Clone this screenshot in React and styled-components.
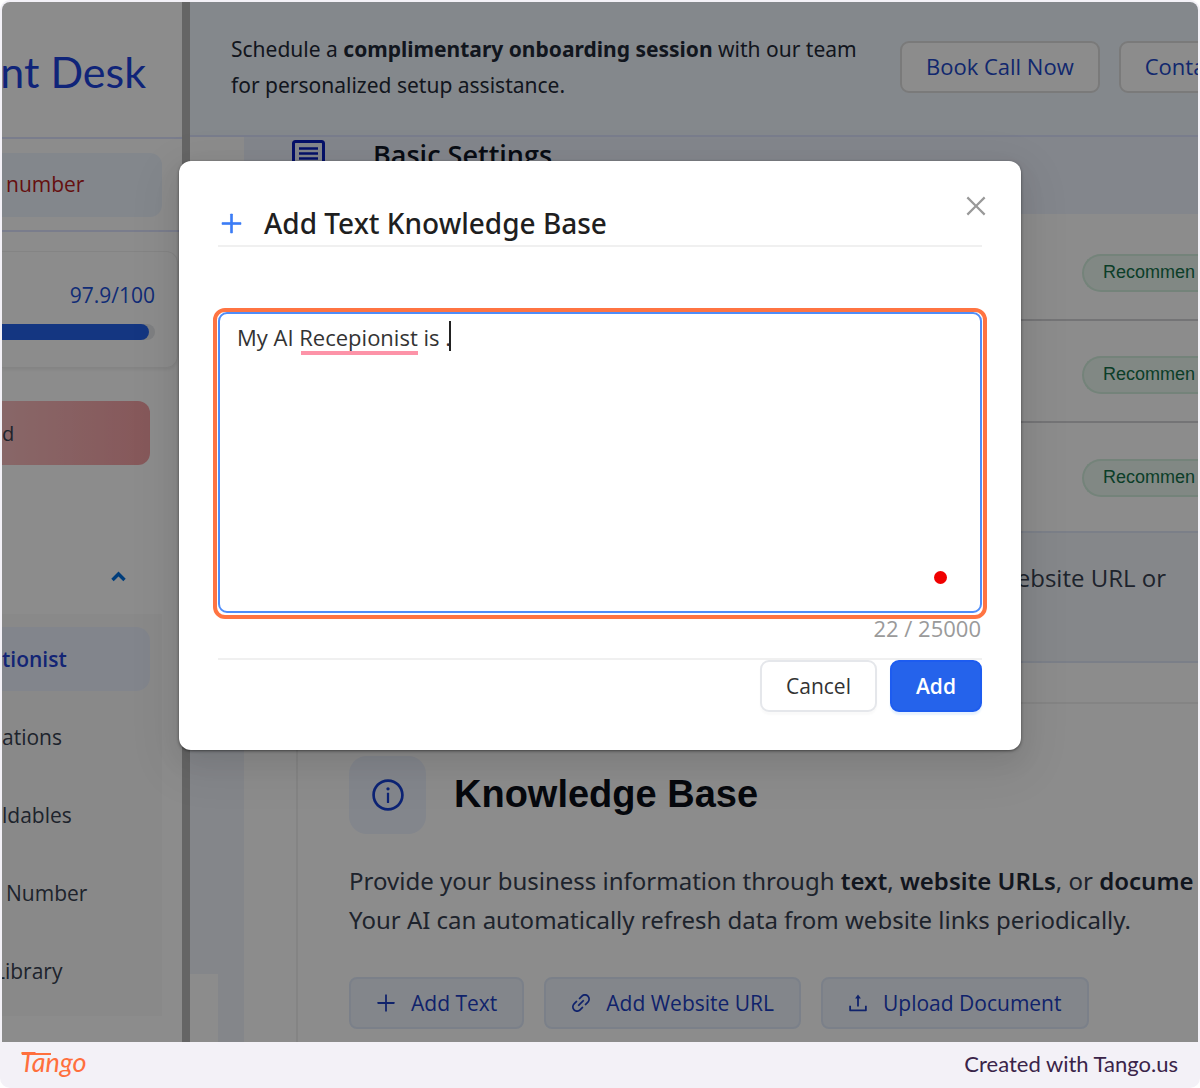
import { useState } from "react"
import styled, { createGlobalStyle } from "styled-components"
import {
    AiOutlineClose,
    AiOutlineInfoCircle,
    AiOutlineLink,
    AiOutlinePlus,
    AiOutlineUpload
} from "react-icons/ai"

const GlobalStyle = createGlobalStyle`
    * {
        box-sizing: border-box;
    }
    body {
        margin: 0;
        background: #fff;
        font-family: "Open Sans", "Noto Sans", sans-serif;
        font-size: 21px;
        color: #1f2937;
    }
    h1, h2, h3, p, ul {
        margin: 0;
        padding: 0;
        font-weight: 400;
    }
    button, textarea {
        font-family: inherit;
        margin: 0;
    }
`

/* frame */
const Frame = styled.div`
    height: 100vh;
    display: flex;
    flex-direction: column;
    padding: 2px 2px 0;
    background: #f3f1f7;
    border-radius: 10px;
    overflow: hidden;
`
const Screen = styled.div`
    position: relative;
    flex: 1;
    min-height: 0;
    display: flex;
    overflow: hidden;
    background: #fff;
    border-radius: 8px 8px 0 0;
`
const Footer = styled.footer`
    flex: none;
    height: 46px;
    display: flex;
    align-items: center;
    justify-content: space-between;
    padding: 0 20px 3px 18px;
    font-family: Lato, sans-serif;
    font-size: 22px;
    color: #3a2449;
`
const TangoLink = styled.a`
    display: flex;
    color: #ff6f3d;
`

/* sidebar */
const Sidebar = styled.aside`
    flex: none;
    width: 180px;
    overflow: hidden;
    background: #fff;
`
const Scrollbar = styled.div`
    flex: none;
    width: 8px;
    background: #b9b9b9;
`
const Brand = styled.div`
    height: 137px;
    display: flex;
    align-items: center;
    justify-content: flex-end;
    padding: 4px 36px 0 0;
    border-bottom: 2px solid #dfe3ff;
    font-family: Lato, sans-serif;
    font-size: 43px;
    white-space: nowrap;
    color: #1d43dc;
`
const NumberWrap = styled.div`
    padding: 14px 20px 13px 0;
    border-bottom: 2px solid #dfe3ff;
`
const NumberBox = styled.div`
    height: 64px;
    display: flex;
    align-items: center;
    padding: 0 0 3px 4px;
    border-radius: 0 12px 12px 0;
    background: #eff6ff;
    color: #b91c1c;
`
const ScoreCard = styled.section`
    height: 117px;
    margin: 19px 4px 0 0;
    padding: 28px 22px 0 0;
    border: 1px solid #f0f0f0;
    border-left: 0;
    border-radius: 0 12px 12px 0;
    box-shadow: 0 2px 3px rgba(0, 0, 0, .06);
`
const Score = styled.p`
    line-height: 30px;
    text-align: right;
    font-weight: 500;
    color: #2050d8;
`
const Track = styled.div`
    height: 16px;
    margin-top: 14px;
    border-radius: 0 8px 8px 0;
    background: #e5e7eb;
`
const Fill = styled.div`
    height: 100%;
    border-radius: inherit;
    background: #2563eb;
`
const Danger = styled.button`
    display: block;
    width: 148px;
    height: 64px;
    margin-top: 33px;
    padding: 0;
    border: 0;
    border-radius: 0 12px 12px 0;
    background: linear-gradient(90deg, #f8bcbe, #f5a0a4);
    font-size: 20px;
    text-align: left;
    color: #374151;
`
const MenuHead = styled.div`
    height: 149px;
    display: flex;
    align-items: center;
    justify-content: flex-end;
    padding: 74px 56px 0 0;
`
const Menu = styled.ul`
    display: grid;
    gap: 14px;
    margin-right: 20px;
    padding: 13px 12px 13px 0;
    background: #fafafa;
    list-style: none;
`
const MenuLink = styled.a`
    display: block;
    height: 64px;
    border-radius: 0 14px 14px 0;
    background: ${({ $active }) => ($active ? "#edf2ff" : "transparent")};
    color: ${({ $active }) => ($active ? "#2342d5" : "#374151")};
    font-weight: ${({ $active }) => ($active ? 600 : 400)};
    line-height: 65px;
    text-decoration: none;
    text-indent: ${({ $indent = 0 }) => $indent}px;
    white-space: nowrap;
`

/* main column */
const Main = styled.main`
    flex: 1;
    min-width: 0;
    display: flex;
    flex-direction: column;
    overflow: hidden;
`
const Banner = styled.header`
    flex: none;
    height: 135px;
    display: flex;
    align-items: flex-start;
    padding: 29px 0 0 41px;
    border-bottom: 2px solid #dde4ff;
    background: #f0f8ff;
`
const BannerText = styled.p`
    flex: none;
    width: 669px;
    font-family: "Noto Sans", sans-serif;
    line-height: 36px;
    white-space: nowrap;
`
const BannerButton = styled.button`
    flex: none;
    height: 52px;
    margin: 10px 19px 0 0;
    padding: 0 24px 2px;
    border: 2px solid #dedede;
    border-radius: 9px;
    background: #fff;
    font-size: 22px;
    white-space: nowrap;
    color: #2148c8;
`
const Body = styled.div`
    flex: 1;
    min-height: 0;
    display: flex;
`
const Gutter = styled.div`
    flex: none;
    width: 54px;
    display: flex;
    flex-direction: column;
    justify-content: space-between;
    background: #f1f5fb;
`
const GutterTop = styled.div`
    height: 300px;
    background: #fff;
`
const GutterBottom = styled.div`
    width: 28px;
    height: 68px;
    background: #fff;
`
const Content = styled.div`
    flex: 1;
    min-width: 0;
`
const SectionHead = styled.div`
    height: 77px;
    display: flex;
    gap: 48px;
    padding: 3px 0 0 48px;
    background: #eff4ff;
`
const SectionTitle = styled.h2`
    font-size: 27px;
    font-weight: 600;
    line-height: 30px;
    color: #111827;
`
const Rows = styled.div`
    padding: 5px 0 6px;
`
const Row = styled.div`
    height: 102px;
    display: flex;
    align-items: center;
    justify-content: flex-end;
    overflow: hidden;
    padding-top: 7px;
    border-bottom: ${({ $last }) => ($last ? "0" : "2px solid #d4d4d8")};
`
const Badge = styled.span`
    flex: none;
    width: 116px;
    height: 38px;
    display: flex;
    align-items: center;
    padding-left: 19px;
    border: 2px solid #d3efde;
    border-right: 0;
    border-radius: 19px 0 0 19px;
    background: #ebf8f0;
    font-family: "Liberation Sans", Arial, sans-serif;
    font-size: 18px;
    white-space: nowrap;
    color: #15714a;
`
const Tip = styled.div`
    height: 132px;
    padding: 27px 32px 0 0;
    border: solid #e1e8f7;
    border-width: 2px 0;
    background: #f3f6fb;
    font-size: 24px;
    line-height: 36px;
    text-align: right;
    color: #374151;
`
const Card = styled.section`
    margin: 39px 0 0 52px;
    padding: 52px 0 51px 51px;
    border: solid #f0f0f0;
    border-width: 2px 0 0 2px;
    white-space: nowrap;
`
const CardHead = styled.div`
    display: flex;
    align-items: center;
    gap: 28px;
`
const InfoBox = styled.div`
    width: 77px;
    height: 78px;
    display: flex;
    align-items: center;
    justify-content: center;
    border-radius: 18px;
    background: #eef4ff;
    color: #1741d6;
`
const CardTitle = styled.h2`
    padding-bottom: 2px;
    font-family: "Liberation Sans", Arial, sans-serif;
    font-size: 38px;
    font-weight: 700;
    color: #0b0f19;
`
const CardText = styled.p`
    margin-top: 27px;
    font-family: "Noto Sans", sans-serif;
    font-size: 24px;
    line-height: 39px;
    color: #374151;

    strong {
        font-weight: 600;
        color: #1f2937;
    }
`
const CardActions = styled.div`
    display: flex;
    gap: 20px;
    margin-top: 38px;
`
const CardButton = styled.button`
    height: 52px;
    display: flex;
    align-items: center;
    gap: 13px;
    padding: 0 25px 0 23px;
    border: 2px solid #e0eafa;
    border-radius: 8px;
    background: #eef4fd;
    font-size: 21px;
    color: #1d3fc4;
`

/* dialog */
const Mask = styled.div`
    position: absolute;
    inset: 0;
    display: flex;
    align-items: flex-start;
    justify-content: center;
    padding: 159px 16px 0;
    background: rgba(0, 0, 0, .45);
`
const Dialog = styled.div`
    position: relative;
    width: 100%;
    max-width: 842px;
    padding: 40px 39px 38px;
    border-radius: 12px;
    background: #fff;
    box-shadow:
        0 1px 3px rgba(0, 0, 0, .5),
        0 10px 26px rgba(0, 0, 0, .08),
        0 14px 46px 13px rgba(0, 0, 0, .05);
`
const DialogHead = styled.div`
    display: flex;
    align-items: center;
    gap: 19px;
    height: 46px;
    border-bottom: 2px solid #f0f0f0;
`
const DialogTitle = styled.h1`
    font-family: "Noto Sans", sans-serif;
    font-size: 28px;
    font-weight: 500;
    color: #1f1f1f;
    white-space: nowrap;
`
const PlusIcon = styled(AiOutlinePlus)`
    flex: none;
    color: #3b7cf6;
    stroke: currentColor;
    stroke-width: 24px;
`
const CloseButton = styled.button`
    position: absolute;
    top: 31px;
    right: 31px;
    display: flex;
    padding: 0;
    border: 0;
    background: none;
    color: #999;
`
const Field = styled.div`
    position: relative;
    margin: 61px -5px 0;
    padding: 0 1px 2px;
    border: 4px solid #ff7442;
    border-radius: 12px;
`
const TextArea = styled.textarea`
    display: block;
    width: 100%;
    height: 301px;
    padding: 6px 17px;
    border: 2px solid #4f8df9;
    border-radius: 9px;
    outline: 0;
    resize: none;
    font-size: 22px;
    line-height: 34px;
    color: #333;
`
const Misspelling = styled.span`
    position: absolute;
    top: 39px;
    left: 84px;
    width: 117px;
    height: 4px;
    background: #fd93a8;
`
const Caret = styled.span`
    position: absolute;
    top: 9px;
    left: 232px;
    width: 2px;
    height: 30px;
    background: #222;
`
const RedDot = styled.span`
    position: absolute;
    right: 36px;
    bottom: 31px;
    width: 13px;
    height: 13px;
    border-radius: 50%;
    background: #f00000;
`
const Count = styled.p`
    height: 39px;
    padding-right: 1px;
    font-size: 22px;
    line-height: 19px;
    text-align: right;
    color: #9a9a9a;
`
const DialogFoot = styled.div`
    display: flex;
    justify-content: flex-end;
    gap: 13px;
    border-top: 2px solid #f0f0f0;
`
const DialogButton = styled.button`
    height: 52px;
    padding: 0 24px;
    border: 2px solid ${({ $primary }) => ($primary ? "#1d5cf0" : "#e5e7eb")};
    border-radius: 9px;
    background: ${({ $primary }) => ($primary ? "#2563eb" : "#fff")};
    box-shadow: 0 3px 2px ${({ $primary }) => ($primary ? "#e6f1ff" : "#fafafa")};
    font-size: 21px;
    font-weight: ${({ $primary }) => ($primary ? 600 : 400)};
    color: ${({ $primary }) => ($primary ? "#fff" : "#333")};
`

const menu = [
    { label: "tionist", active: true },
    { label: "ations" },
    { label: "ldables" },
    { label: "Number", indent: 4 },
    { label: "Library", indent: -8 }
]

const ListIcon = () => (
    <svg width="33" height="33" viewBox="0 0 33 33" fill="none" stroke="#0a1fc0" aria-hidden="true">
        <rect x="1.5" y="1.5" width="30" height="30" rx="2" strokeWidth="3" />
        <path d="M7 8.5h19M7 13.5h19M7 18.5h19M7 23.5h12" strokeWidth="2.5" />
    </svg>
)

const ChevronUp = () => (
    <svg width="15" height="11" viewBox="0 0 15 11" fill="none" aria-hidden="true">
        <path d="M1.5 9 7.5 3l6 6" stroke="#0070e0" strokeWidth="3.4" />
    </svg>
)

const TangoLogo = () => (
    <svg width="72" height="36" viewBox="0 0 72 36" aria-hidden="true">
        <path d="M2 8h29" stroke="currentColor" strokeWidth="1.8" />
        <text x="0" y="26" fill="currentColor" fontFamily="Lato" fontStyle="italic" fontSize="27">Tango</text>
    </svg>
)

const App = () => {
    const [text, setText] = useState("My AI Recepionist is .")

    return (<>
        <GlobalStyle />
        <Frame>
            <Screen>
                <Sidebar>
                    <Brand>nt Desk</Brand>
                    <NumberWrap>
                        <NumberBox>number</NumberBox>
                    </NumberWrap>
                    <ScoreCard>
                        <Score>97.9/100</Score>
                        <Track>
                            <Fill style={{ width: `${97.9 - 2}%` }} />
                        </Track>
                    </ScoreCard>
                    <Danger type="button">d</Danger>
                    <MenuHead><ChevronUp /></MenuHead>
                    <Menu>
                        {menu.map(({ label, active, indent }) => (
                            <li key={label}>
                                <MenuLink href="#" $active={active} $indent={indent}>{label}</MenuLink>
                            </li>
                        ))}
                    </Menu>
                </Sidebar>
                <Scrollbar />

                <Main>
                    <Banner>
                        <BannerText>
                            Schedule a <strong>complimentary onboarding session</strong> with our team<br />
                            for personalized setup assistance.
                        </BannerText>
                        <BannerButton type="button">Book Call Now</BannerButton>
                        <BannerButton type="button">Conta</BannerButton>
                    </Banner>
                    <Body>
                        <Gutter>
                            <GutterTop />
                            <GutterBottom />
                        </Gutter>
                        <Content>
                            <SectionHead>
                                <ListIcon />
                                <SectionTitle>Basic Settings</SectionTitle>
                            </SectionHead>
                            <Rows>
                                <Row><Badge>Recommen</Badge></Row>
                                <Row><Badge>Recommen</Badge></Row>
                                <Row $last><Badge>Recommen</Badge></Row>
                            </Rows>
                            <Tip>ebsite URL or</Tip>
                            <Card>
                                <CardHead>
                                    <InfoBox><AiOutlineInfoCircle size={36} /></InfoBox>
                                    <CardTitle>Knowledge Base</CardTitle>
                                </CardHead>
                                <CardText>
                                    Provide your business information through <strong>text</strong>, <strong>website URLs</strong>, or <strong>docume</strong><br />
                                    Your AI can automatically refresh data from website links periodically.
                                </CardText>
                                <CardActions>
                                    <CardButton type="button"><AiOutlinePlus size={24} />Add Text</CardButton>
                                    <CardButton type="button"><AiOutlineLink size={24} />Add Website URL</CardButton>
                                    <CardButton type="button"><AiOutlineUpload size={24} />Upload Document</CardButton>
                                </CardActions>
                            </Card>
                        </Content>
                    </Body>
                </Main>

                <Mask>
                    <Dialog role="dialog" aria-labelledby="dialog-title">
                        <DialogHead>
                            <PlusIcon size={27} />
                            <DialogTitle id="dialog-title">Add Text Knowledge Base</DialogTitle>
                        </DialogHead>
                        <CloseButton type="button" aria-label="Close"><AiOutlineClose size={28} /></CloseButton>
                        <Field>
                            <TextArea
                            aria-labelledby="dialog-title"
                            spellCheck={false}
                            value={text}
                            onChange={(e) => setText(e.target.value)}
                            />
                            <Misspelling />
                            <Caret />
                            <RedDot />
                        </Field>
                        <Count>{text.length} / 25000</Count>
                        <DialogFoot>
                            <DialogButton type="button">Cancel</DialogButton>
                            <DialogButton type="button" $primary>Add</DialogButton>
                        </DialogFoot>
                    </Dialog>
                </Mask>
            </Screen>
            <Footer>
                <TangoLink href="#" aria-label="Tango"><TangoLogo /></TangoLink>
                <span>Created with Tango.us</span>
            </Footer>
        </Frame>
    </>)
}

export default App
